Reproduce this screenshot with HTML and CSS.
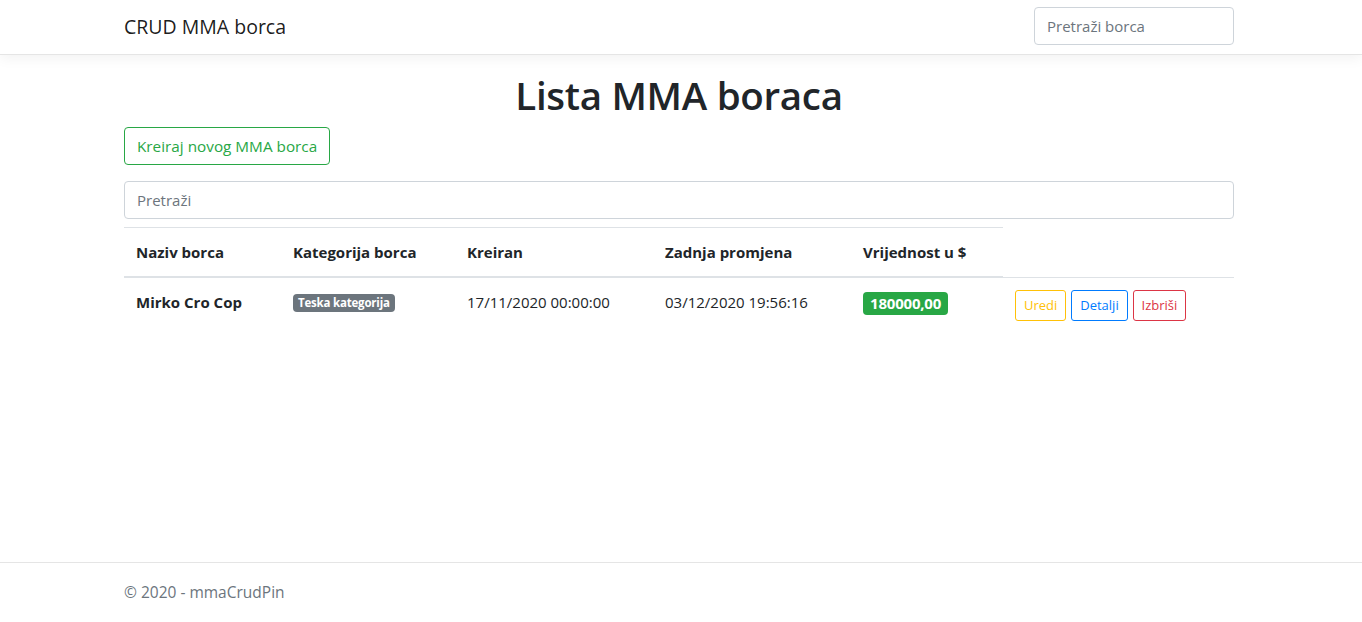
FILE: index.html
```html
<!DOCTYPE html>
<html lang="hr">
<head>
<meta charset="utf-8">
<title>Lista MMA boraca</title>
<link rel="stylesheet" href="styles.css">
</head>
<body>
<header class="navbar">
  <div class="container nav-inner">
    <a class="brand" href="#">CRUD MMA borca</a>
    <input class="form-control nav-search" type="text" placeholder="Pretraži borca">
  </div>
</header>
<main class="container main">
  <h1 class="title">Lista MMA boraca</h1>
  <p class="create-row"><a class="btn btn-outline-success" href="#">Kreiraj novog MMA borca</a></p>
  <input class="form-control search" type="text" placeholder="Pretraži">
  <table class="table">
    <thead>
      <tr>
        <th class="c1">Naziv borca</th>
        <th class="c2">Kategorija borca</th>
        <th class="c3">Kreiran</th>
        <th class="c4">Zadnja promjena</th>
        <th class="c5">Vrijednost u $</th>
      </tr>
    </thead>
    <tbody>
      <tr>
        <td class="bold">Mirko Cro Cop</td>
        <td><span class="badge badge-secondary">Teska kategorija</span></td>
        <td>17/11/2020 00:00:00</td>
        <td>03/12/2020 19:56:16</td>
        <td><span class="badge badge-success badge-lg">180000,00</span></td>
        <td class="actions">
          <a class="btn btn-sm btn-outline-warning" href="#">Uredi</a>
          <a class="btn btn-sm btn-outline-primary" href="#">Detalji</a>
          <a class="btn btn-sm btn-outline-danger" href="#">Izbriši</a>
        </td>
      </tr>
    </tbody>
  </table>
</main>
<footer class="footer">
  <div class="container">© 2020 - mmaCrudPin</div>
</footer>
</body>
</html>
```

FILE: styles.css
```css
* { box-sizing: border-box; }
html, body { margin: 0; padding: 0; }
body {
  font-family: "Open Sans", "Noto Sans", "Liberation Sans", sans-serif;
  font-size: 16px;
  line-height: 1.5;
  color: #212529;
  background: #fff;
  min-height: 622px;
  display: flex;
  flex-direction: column;
}
.container {
  width: 1110px;
  margin-left: 124px;
}
.navbar {
  height: 55px;
  background: #fff;
  border-bottom: 1px solid #e5e5e5;
  box-shadow: 0 4px 12px rgba(0,0,0,.05);
  display: flex;
  align-items: center;
}
.nav-inner {
  display: flex;
  align-items: center;
  justify-content: space-between;
}
.brand {
  font-size: 19.5px;
  color: rgba(0,0,0,.9);
  text-decoration: none;
  line-height: 30px;
}
.form-control {
  display: block;
  height: 38px;
  padding: 6px 12px;
  font-family: inherit;
  font-size: 15px;
  line-height: 24px;
  color: #495057;
  background: #fff;
  border: 1px solid #ced4da;
  border-radius: 4px;
  outline: none;
}
.form-control::placeholder { color: #6c757d; opacity: 1; }
.nav-search { width: 200px; margin-top: -2px; }
.main { padding-top: 16px; }
.title {
  margin: 0 0 8px;
  text-align: center;
  font-size: 38.5px;
  font-weight: 600;
  line-height: 48px;
  letter-spacing: -0.3px;
}
.create-row { margin: 0 0 16px; }
.btn {
  display: inline-block;
  font-size: 15.3px;
  line-height: 24px;
  padding: 6px 12px;
  border: 1px solid transparent;
  border-radius: 4px;
  text-decoration: none;
  vertical-align: middle;
}
.btn-outline-success { color: #28a745; border-color: #28a745; }
.search { width: 100%; margin-bottom: 8px; }
.table {
  width: 100%;
  border-collapse: collapse;
  color: #212529;
}
.table th, .table td {
  padding: 12px;
  text-align: left;
  vertical-align: top;
  border-top: 1px solid #dee2e6;
  font-size: 15px;
  line-height: 24px;
}
.table thead th {
  border-bottom: 2px solid #dee2e6;
  font-weight: 700;
}
.c1 { width: 157px; }
.c2 { width: 174px; }
.c3 { width: 198px; }
.c4 { width: 198px; }
.c5 { width: 152px; }
.bold { font-weight: 700; }
.badge {
  display: inline-block;
  padding: 3px 5px;
  font-size: 11.5px;
  font-weight: 700;
  line-height: 1;
  color: #fff;
  border-radius: 4px;
  vertical-align: 1px;
  letter-spacing: -0.2px;
}
.badge-secondary { background: #6c757d; }
.badge-success { background: #28a745; }
.badge-lg { font-size: 15px; padding: 4px 7px; vertical-align: -1px; }
.actions { white-space: nowrap; padding-top: 12px; }
.btn-sm {
  font-size: 13px;
  line-height: 21px;
  padding: 4px 8px;
  border-radius: 3px;
  margin-right: 1px;
}
.btn-outline-warning { color: #ffc107; border-color: #ffc107; }
.btn-outline-primary { color: #007bff; border-color: #007bff; }
.btn-outline-danger { color: #dc3545; border-color: #dc3545; }
.footer {
  margin-top: auto;
  border-top: 1px solid #e5e5e5;
  line-height: 59px;
  color: #6c757d;
  font-size: 15.5px;
}
.footer .container { height: 59px; }
```
